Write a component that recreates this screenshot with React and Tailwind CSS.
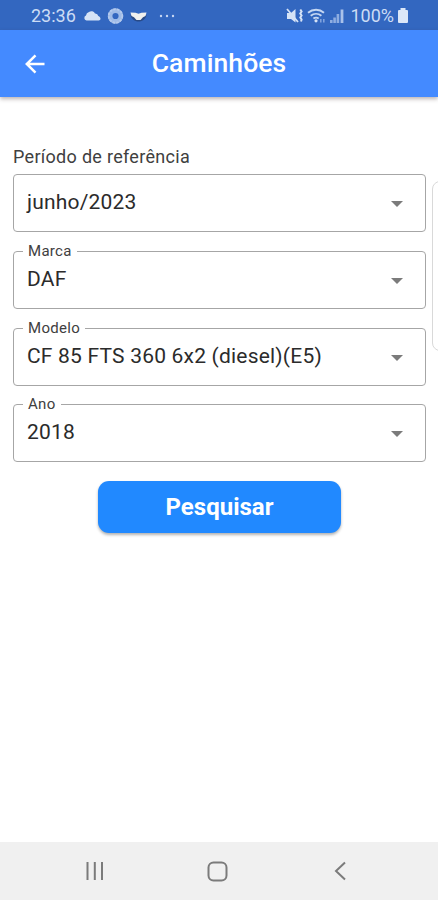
import { useState } from "react";

const FIELDS = [
  { id: "marca", label: "Marca", value: "DAF" },
  { id: "modelo", label: "Modelo", value: "CF 85 FTS 360 6x2 (diesel)(E5)" },
  { id: "ano", label: "Ano", value: "2018" },
];

function StatusBar() {
  return (
    <div className="flex h-[30px] items-center justify-between bg-[#3367c0] pl-[31px] pr-[29px] pt-px text-[#ccdcf5]">
      <div className="flex items-center">
        <span className="text-[18px] leading-none">23:36</span>
        <svg className="ml-2" width="96" height="20" viewBox="0 0 96 20">
          {/* cloud */}
          <path d="M2.500 14.500a2.600 2.600 0 0 1-.5-5A4 4 0 0 1 5 6a4 4 0 0 1 6 1.500 3.200 3.200 0 0 1 3.300 2.500c1.500.4 2.200 1.700 2.200 2.800 0 1-.8 1.700-1.800 1.700z" fill="#d6e3f6" />
          {/* ring */}
          <circle cx="31.500" cy="10" r="5.400" fill="none" stroke="#9fbbe7" strokeWidth="4.600" />
          <circle cx="31.500" cy="10" r="6.800" fill="none" stroke="#b5caed" strokeWidth="1.800" strokeDasharray="2.400 1.300" />
          {/* handshake badge */}
          <path d="M46.500 9h16c-.8 4-4 6.500-8 6.500s-7.200-2.500-8-6.500z" fill="#294a86" />
          <path d="M46.500 6.500l5 .3 3 1 3-1 5-.3-1 3.500-2.500 1.200-2.500 2.800h-4l-2.500-2.800-2.500-1.200z" fill="#f0f0ee" />
          <g fill="#c6d7f2">
            <circle cx="77" cy="10" r="1.200" />
            <circle cx="83" cy="10" r="1.200" />
            <circle cx="89" cy="10" r="1.200" />
          </g>
        </svg>
      </div>
      <div className="flex items-center">
        <svg width="60" height="20" viewBox="0 0 60 20" fill="none">
          {/* muted speaker with vibration */}
          <path d="M1 7h4l4.500-4v13.500L5 13H1z" fill="#d6e3f6" />
          <path d="M1 3l11 13" stroke="#d6e3f6" strokeWidth="1.800" />
          <path d="M14.300 3.500l1.300 2-1.300 2 1.300 2-1.300 2 1.300 2-.6 2" stroke="#d6e3f6" strokeWidth="2" />
          {/* wifi */}
          <path d="M22 6.800c4.800-4 11.300-4 16 0M24.700 9.800c3.200-2.600 7.500-2.600 10.700 0M27.400 12.600c1.600-1.200 3.700-1.200 5.300 0" stroke="#c6d7f2" strokeWidth="1.900" />
          <circle cx="30" cy="14.800" r="1.600" fill="#d6e3f6" />
          <path d="M34.800 13v3.600M37.800 13v3.600" stroke="#84a6df" strokeWidth="1.500" />
          {/* signal */}
          <path d="M45.300 14v3M48.600 11.500v5.500M51.900 8v9" stroke="#8eade1" strokeWidth="2.600" />
          <path d="M54.600 3.500h2.800v13.500h-2.800z" fill="#a9c1ea" />
        </svg>
        <span className="ml-[4px] text-[18px] leading-none">100%</span>
        <svg className="ml-[3px]" width="12" height="17" viewBox="0 0 12 17">
          <path d="M3.500 1h5v2H10a1 1 0 0 1 1 1v11a1 1 0 0 1-1 1H2a1 1 0 0 1-1-1V4a1 1 0 0 1 1-1h1.500z" fill="#dce7f8" />
        </svg>
      </div>
    </div>
  );
}

function AppBar() {
  return (
    <header className="grid h-[67px] grid-cols-[69px_1fr_69px] items-center bg-[#448aff] text-white shadow-[0_2px_4px_rgba(60,40,40,0.35)]">
      <button className="flex justify-center" aria-label="Voltar">
        <svg width="20" height="20" viewBox="0 0 20 20" fill="none" stroke="currentColor" strokeWidth="2.500">
          <path d="M19.500 10H2.500M10.500 1.300L1.800 10l8.700 8.700" />
        </svg>
      </button>
      <h1 className="text-center text-[26.500px] font-medium leading-none tracking-[0.1px]">Caminhões</h1>
    </header>
  );
}

function SelectField({ label, value, open, onToggle }) {
  return (
    <button
      onClick={onToggle}
      aria-expanded={open}
      className="relative flex h-[58px] w-full items-center justify-between rounded-[4px] border border-[#a6a6a6] bg-white pl-[13px] pr-[22px] pt-[2px] text-left"
    >
      {label && (
        <span className="absolute -top-[9px] left-[9px] bg-white px-[5px] text-[15px] leading-[17px] tracking-[0.3px] text-[#404040]">
          {label}
        </span>
      )}
      <span className="pb-[3px] text-[21px] leading-none tracking-[0.2px] text-[#2b2b2b]">{value}</span>
      <svg width="12" height="6" viewBox="0 0 12 6">
        <path d="M0 0h12L6 6z" fill="#7b7b7b" />
      </svg>
    </button>
  );
}

function NavBar() {
  return (
    <nav className="flex h-[58px] items-center bg-[#f0f0f0] pl-[85px] text-[#7b7b7b]">
      <svg width="20" height="20" viewBox="0 0 20 20" stroke="currentColor" strokeWidth="2">
        <path d="M2.500 1v18M9.800 1v18M17 1v18" />
      </svg>
      <svg className="ml-[102px]" width="21" height="21" viewBox="0 0 21 21" fill="none" stroke="currentColor" strokeWidth="2">
        <rect x="1.500" y="1.500" width="18" height="18" rx="5" />
      </svg>
      <svg className="ml-[106px]" width="12" height="20" viewBox="0 0 12 20" fill="none" stroke="currentColor" strokeWidth="2">
        <path d="M11 1.500L2 10l9 8.500" />
      </svg>
    </nav>
  );
}

export default function App() {
  const [openField, setOpenField] = useState(null);
  const toggle = (id) => setOpenField(openField === id ? null : id);

  return (
    <div className="relative flex h-[900px] w-[438px] flex-col overflow-hidden bg-white font-['Roboto',sans-serif]">
      <StatusBar />
      <AppBar />

      <main className="flex flex-1 flex-col pl-[13px] pr-3 pt-[49px]">
        <p className="text-[18px] leading-[22px] tracking-[0.3px] text-[#404040]">Período de referência</p>
        <div className="mt-[6px] flex flex-col gap-[18.800px]">
          <SelectField value="junho/2023" open={openField === "periodo"} onToggle={() => toggle("periodo")} />
          {FIELDS.map((field) => (
            <SelectField
              key={field.id}
              label={field.label}
              value={field.value}
              open={openField === field.id}
              onToggle={() => toggle(field.id)}
            />
          ))}
        </div>
        <button className="mt-[18.600px] h-[52px] w-[243px] self-center rounded-[11px] bg-[#2189ff] text-[24px] font-bold leading-none text-white shadow-[0_2px_3px_rgba(0,0,0,0.3)]">
          Pesquisar
        </button>
      </main>

      {/* edge panel handle */}
      <div className="absolute -right-[10px] top-[181px] h-[170px] w-4 rounded-[8px] border border-[#d9d9d9] bg-white" />

      <NavBar />
    </div>
  );
}
